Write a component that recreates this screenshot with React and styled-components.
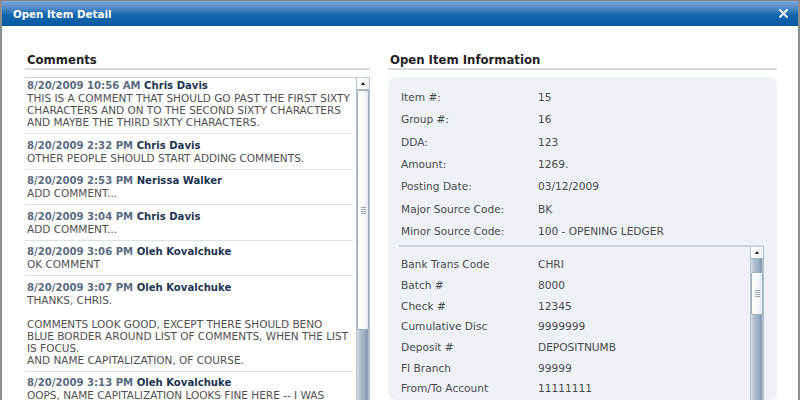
import React from "react";
import styled, { createGlobalStyle } from "styled-components";

const Global = createGlobalStyle`
  html, body { margin: 0; padding: 0; background: #ffffff; }
  body { font-family: "DejaVu Sans", Verdana, sans-serif; }
  * { box-sizing: border-box; }
`;

const Window = styled.div`
  width: 800px;
  height: 400px;
  overflow: hidden;
  background: #ffffff;
  border-left: 2px solid #8e8e8e;
  border-right: 2px solid #8e8e8e;
  border-top: 1px solid #7f8a96;
  display: flex;
  flex-direction: column;
`;

const TitleBar = styled.div`
  height: 25px;
  flex: 0 0 25px;
  display: flex;
  align-items: center;
  justify-content: space-between;
  padding: 0 10px 0 11px;
  background: linear-gradient(#7ea8d6 0%, #4f88c4 30%, #1566ad 55%, #065aa2 100%);
`;

const Title = styled.div`
  color: #ffffff;
  font-weight: bold;
  font-size: 10.3px;
  letter-spacing: 0;
`;

const CloseIcon = styled.svg`
  width: 9px;
  height: 9px;
  display: block;
`;

const Body = styled.div`
  flex: 1;
  display: grid;
  grid-template-columns: 345px 389px;
  column-gap: 18px;
  padding: 27px 0 0 23px;
  min-height: 0;
`;

const Column = styled.div`
  display: flex;
  flex-direction: column;
  min-height: 0;
`;

const Heading = styled.div`
  font-weight: bold;
  font-size: 11.7px;
  line-height: 14px;
  color: #1e1e1e;
  padding: 0 0 1px 2px;
  border-bottom: 2px solid #d5dce6;
  margin-bottom: 7px;
`;

const ListBox = styled.div`
  flex: 1;
  display: flex;
  border-top: 1px solid #c3ccd8;
  min-height: 0;
  overflow: hidden;
`;

const Entries = styled.div`
  flex: 1;
  padding-right: 3px;
  overflow: hidden;
`;

const Entry = styled.div`
  padding: 5.5px 0 5px 2px;
  border-bottom: 1px solid #dde3ea;
  font-size: 10.5px;
  line-height: 12px;
  &:first-child { padding-top: 2px; }
`;

const EntryHead = styled.div`
  font-weight: bold;
  font-size: 10.1px;
  color: #5a6b80;
  white-space: nowrap;
`;

const Author = styled.span`
  color: #1d3550;
`;

const EntryText = styled.div`
  color: #4f4f4f;
  white-space: pre-line;
`;

const Scrollbar = styled.div`
  width: 14px;
  flex: 0 0 14px;
  display: flex;
  flex-direction: column;
  border-left: 1px solid #b4bfcc;
  border-right: 1px solid #b4bfcc;
  background: linear-gradient(to right, #d9e0e9 0%, #b2bfd0 25%, #9dadc3 60%, #8798b0 85%, #c3ccd8 100%);
`;

const ScrollButton = styled.div`
  height: 12px;
  flex: 0 0 12px;
  background: linear-gradient(to right, #ffffff, #eef1f5);
  border-bottom: 1px solid #aab5c3;
  display: flex;
  align-items: center;
  justify-content: center;
`;

const Arrow = styled.div`
  width: 0;
  height: 0;
  border-left: 2.5px solid transparent;
  border-right: 2.5px solid transparent;
  border-bottom: 3px solid #1a1a1a;
`;

const Thumb = styled.div`
  margin-top: ${(p) => p.$offset}px;
  height: ${(p) => p.$size}px;
  flex: 0 0 auto;
  background: linear-gradient(to right, #ffffff 0%, #f6f8fa 60%, #e3e8ef 100%);
  border: 1px solid #a3aebd;
  border-radius: 2px;
  display: flex;
  align-items: center;
  justify-content: center;
`;

const Grip = styled.div`
  width: 5px;
  height: 7px;
  background: repeating-linear-gradient(#9aa4b1 0px, #9aa4b1 1px, transparent 1px, transparent 2px);
`;

const Panel = styled.div`
  flex: 1;
  display: flex;
  flex-direction: column;
  background: #eef2f7;
  border-radius: 8px;
  padding: 9px 13px 0 11px;
  min-height: 0;
`;

const FieldGrid = styled.div`
  display: grid;
  grid-template-columns: 137px 1fr;
  padding-left: 2px;
  font-size: 10.6px;
  line-height: ${(p) => p.$row}px;
  color: #4a4a4a;
`;

const Label = styled.div`
  white-space: nowrap;
`;

const Value = styled.div`
  white-space: nowrap;
`;

const InnerBox = styled.div`
  margin-top: 3px;
  flex: 1;
  display: flex;
  border-top: 2px solid #cdd5e0;
  min-height: 0;
`;

const InnerFields = styled.div`
  flex: 1;
  padding-top: 7px;
`;

const comments = [
  { date: "8/20/2009 10:56 AM", who: "Chris Davis", text: "THIS IS A COMMENT THAT SHOULD GO PAST THE FIRST SIXTY\nCHARACTERS AND ON TO THE SECOND SIXTY CHARACTERS\nAND MAYBE THE THIRD SIXTY CHARACTERS." },
  { date: "8/20/2009 2:32 PM", who: "Chris Davis", text: "OTHER PEOPLE SHOULD START ADDING COMMENTS." },
  { date: "8/20/2009 2:53 PM", who: "Nerissa Walker", text: "ADD COMMENT..." },
  { date: "8/20/2009 3:04 PM", who: "Chris Davis", text: "ADD COMMENT..." },
  { date: "8/20/2009 3:06 PM", who: "Oleh Kovalchuke", text: "OK COMMENT" },
  { date: "8/20/2009 3:07 PM", who: "Oleh Kovalchuke", text: "THANKS, CHRIS.\n\u00a0\nCOMMENTS LOOK GOOD, EXCEPT THERE SHOULD BENO\nBLUE BORDER AROUND LIST OF COMMENTS, WHEN THE LIST\nIS FOCUS.\nAND NAME CAPITALIZATION, OF COURSE." },
  { date: "8/20/2009 3:13 PM", who: "Oleh Kovalchuke", text: "OOPS, NAME CAPITALIZATION LOOKS FINE HERE -- I WAS\nLOOKING AT THE WRONG PLACE." },
];

const mainFields = [
  ["Item #:", "15"],
  ["Group #:", "16"],
  ["DDA:", "123"],
  ["Amount:", "1269."],
  ["Posting Date:", "03/12/2009"],
  ["Major Source Code:", "BK"],
  ["Minor Source Code:", "100 - OPENING LEDGER"],
];

const extraFields = [
  ["Bank Trans Code", "CHRI"],
  ["Batch #", "8000"],
  ["Check #", "12345"],
  ["Cumulative Disc", "9999999"],
  ["Deposit #", "DEPOSITNUMB"],
  ["FI Branch", "99999"],
  ["From/To Account", "11111111"],
  ["Serial #", "5555"],
];

function Scroll({ offset, size }) {
  return (
    <Scrollbar>
      <ScrollButton>
        <Arrow />
      </ScrollButton>
      <Thumb $offset={offset} $size={size}>
        <Grip />
      </Thumb>
    </Scrollbar>
  );
}

function Fields({ rows, row }) {
  return (
    <FieldGrid $row={row}>
      {rows.map(([l, v]) => (
        <React.Fragment key={l}>
          <Label>{l}</Label>
          <Value>{v}</Value>
        </React.Fragment>
      ))}
    </FieldGrid>
  );
}

export default function App() {
  return (
    <>
      <Global />
      <Window>
        <TitleBar>
          <Title>Open Item Detail</Title>
          <CloseIcon viewBox="0 0 9 9">
            <path d="M1.2 1.2 L7.8 7.8 M7.8 1.2 L1.2 7.8" stroke="#e6eef8" strokeWidth="2.2" strokeLinecap="square" />
          </CloseIcon>
        </TitleBar>
        <Body>
          <Column>
            <Heading>Comments</Heading>
            <ListBox>
              <Entries>
                {comments.map((c, i) => (
                  <Entry key={i}>
                    <EntryHead>
                      {c.date} <Author>{c.who}</Author>
                    </EntryHead>
                    <EntryText>{c.text}</EntryText>
                  </Entry>
                ))}
              </Entries>
              <Scroll offset={0} size={240} />
            </ListBox>
          </Column>
          <Column>
            <Heading>Open Item Information</Heading>
            <Panel>
              <Fields rows={mainFields} row={22.33} />
              <InnerBox>
                <InnerFields>
                  <Fields rows={extraFields} row={20.67} />
                </InnerFields>
                <Scroll offset={13} size={43} />
              </InnerBox>
            </Panel>
          </Column>
        </Body>
      </Window>
    </>
  );
}
